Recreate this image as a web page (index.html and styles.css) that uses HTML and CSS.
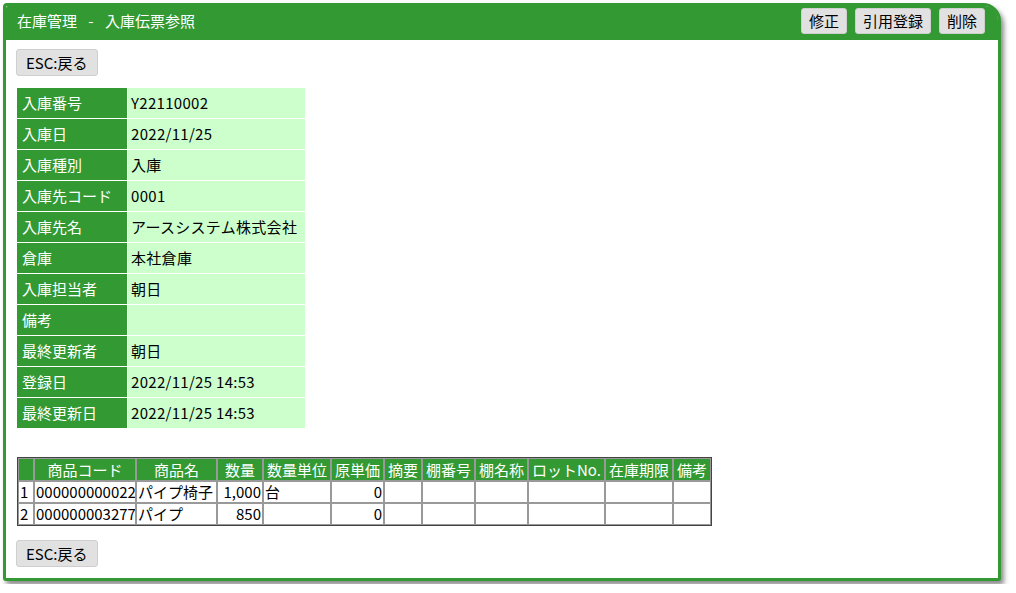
FILE: index.html
```html
<!DOCTYPE html>
<html lang="ja">
<head>
    <meta charset="UTF-8">
    <title>在庫管理 - 入庫伝票参照</title>
    <link rel="stylesheet" href="styles.css">
</head>
<body>
    <div class="window">
        <header class="titlebar">
            <h1>在庫管理 - 入庫伝票参照</h1>
            <div class="tools">
                <button class="btn">修正</button>
                <button class="btn">引用登録</button>
                <button class="btn">削除</button>
            </div>
        </header>

        <div class="content">
            <button class="btn back">ESC:戻る</button>

            <table class="info">
                <tr><th>入庫番号</th><td>Y22110002</td></tr>
                <tr><th>入庫日</th><td>2022/11/25</td></tr>
                <tr><th>入庫種別</th><td>入庫</td></tr>
                <tr><th>入庫先コード</th><td>0001</td></tr>
                <tr><th>入庫先名</th><td>アースシステム株式会社</td></tr>
                <tr><th>倉庫</th><td>本社倉庫</td></tr>
                <tr><th>入庫担当者</th><td>朝日</td></tr>
                <tr><th>備考</th><td></td></tr>
                <tr><th>最終更新者</th><td>朝日</td></tr>
                <tr><th>登録日</th><td>2022/11/25 14:53</td></tr>
                <tr><th>最終更新日</th><td>2022/11/25 14:53</td></tr>
            </table>

            <table class="detail">
                <colgroup>
                    <col class="c-no">
                    <col class="c-code">
                    <col class="c-name">
                    <col class="c-qty">
                    <col class="c-unit">
                    <col class="c-price">
                    <col class="c-memo">
                    <col class="c-shelf">
                    <col class="c-shelfname">
                    <col class="c-lot">
                    <col class="c-limit">
                    <col class="c-note">
                </colgroup>
                <tr>
                    <th></th>
                    <th>商品コード</th>
                    <th>商品名</th>
                    <th>数量</th>
                    <th>数量単位</th>
                    <th>原単価</th>
                    <th>摘要</th>
                    <th>棚番号</th>
                    <th>棚名称</th>
                    <th>ロットNo.</th>
                    <th>在庫期限</th>
                    <th>備考</th>
                </tr>
                <tr>
                    <td>1</td>
                    <td>000000000022</td>
                    <td>パイプ椅子</td>
                    <td class="num">1,000</td>
                    <td>台</td>
                    <td class="num">0</td>
                    <td></td><td></td><td></td><td></td><td></td><td></td>
                </tr>
                <tr>
                    <td>2</td>
                    <td>000000003277</td>
                    <td>パイプ</td>
                    <td class="num">850</td>
                    <td></td>
                    <td class="num">0</td>
                    <td></td><td></td><td></td><td></td><td></td><td></td>
                </tr>
            </table>

            <button class="btn back">ESC:戻る</button>
        </div>
    </div>
</body>
</html>
```

FILE: styles.css
```css
body {
    margin: 0;
    padding: 3px;
    background: #ffffff;
    font-family: "Noto Sans CJK JP", "Liberation Sans", sans-serif;
    font-size: 15px;
    color: #000;
}
.window {
    width: 992px;
    height: 572px;
    border: 3px solid #339933;
    border-radius: 4px 18px 3px 3px;
    background: #ffffff;
    box-shadow: 3px 4px 5px rgba(0,0,0,0.45);
    display: flex;
    flex-direction: column;
}
.titlebar {
    background: #339933;
    color: #ffffff;
    height: 34px;
    padding: 0 13px 0 11px;
    display: flex;
    align-items: center;
    justify-content: space-between;
    border-radius: 2px 14px 0 0;
}
.titlebar h1 {
    margin: 0 0 4px 0;
    font-size: 15px;
    font-weight: normal;
    line-height: 20px;
    word-spacing: 8px;
}
.tools {
    display: flex;
    gap: 8px;
    margin-bottom: 5px;
}
.btn {
    font-family: "Noto Sans CJK JP", "Liberation Sans", sans-serif;
    font-size: 15px;
    line-height: 20px;
    color: #000;
    background: #e1e1e1;
    border: 1px solid #cfcfcf;
    border-radius: 3px;
    height: 27px;
    padding: 0 7px;
    cursor: pointer;
}
.tools .btn {
    height: 26px;
}
.btn.back {
    padding: 0 9px;
}
.content {
    padding: 9px 10px 10px 10px;
    display: flex;
    flex-direction: column;
    align-items: flex-start;
}
.info {
    margin-top: 11px;
    border-collapse: separate;
    border-spacing: 1px;
}
.info th,
.info td {
    height: 30px;
    padding: 0;
    font-weight: normal;
    text-align: left;
    white-space: nowrap;
    line-height: 20px;
}
.info th {
    width: 105px;
    padding-left: 5px;
    background: #339933;
    color: #ffffff;
}
.info td {
    width: 174px;
    padding-left: 3px;
    background: #ccffcc;
    letter-spacing: 0.3px;
}
.detail {
    width: 694px;
    margin: 28px 0 0 1px;
    border: 1px solid #444;
    border-collapse: separate;
    border-spacing: 0;
    table-layout: fixed;
}
.detail th,
.detail td {
    border: 1px solid #999;
    padding: 0 1px;
    height: 20px;
    line-height: 20px;
    white-space: nowrap;
    overflow: hidden;
}
.detail th {
    background: #339933;
    color: #ffffff;
    font-weight: normal;
    text-align: center;
    height: 21px;
}
.detail td.num {
    text-align: right;
}
.c-no { width: 16px; }
.c-code { width: 102px; }
.c-name { width: 81px; }
.c-qty { width: 46px; }
.c-unit { width: 68px; }
.c-price { width: 53px; }
.c-memo { width: 38px; }
.c-shelf { width: 53px; }
.c-shelfname { width: 53px; }
.c-lot { width: 77px; }
.c-limit { width: 68px; }
.c-note { width: 38px; }
.detail + .btn {
    margin-top: 14px;
}
```
